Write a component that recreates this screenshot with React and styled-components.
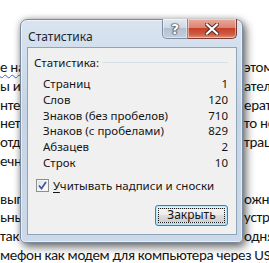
import React from "react";
import styled, { createGlobalStyle } from "styled-components";

const GlobalStyle = createGlobalStyle`
  html, body { margin: 0; padding: 0; background: #ffffff; }
  body { overflow: hidden; }
`;

const Page = styled.div`
  position: relative;
  width: 269px;
  height: 263px;
  overflow: hidden;
  background: #ffffff;
`;

const Document = styled.div`
  padding-top: 58px;
  font-family: Carlito, Lato, "Liberation Sans", sans-serif;
  font-size: 15px;
  letter-spacing: -0.3px;
  line-height: 18.8px;
  color: #161616;
`;

const Line = styled.div`
  display: grid;
  grid-template-columns: 244px 1fr;
  height: 18.8px;
  white-space: nowrap;
`;

const Fragment = styled.span`
  text-decoration: ${(p) => (p.$wavy ? `underline wavy ${p.$wavy}` : "none")};
  text-decoration-thickness: 1px;
  text-underline-offset: 2px;
`;

const FullLine = styled.div`
  height: 18.8px;
  white-space: nowrap;
`;

const Dialog = styled.div`
  position: absolute;
  left: 20px;
  top: 19px;
  width: 223px;
  height: 224px;
  box-sizing: border-box;
  border: 1px solid #7a8ba0;
  border-radius: 7px 7px 5px 5px;
  background: linear-gradient(180deg, #d9e4f0 0%, #c6d5e6 40%, #ccd9e8 100%);
  box-shadow: 0 0 0 1px rgba(255,255,255,0.55) inset, 3px 4px 10px rgba(0,0,0,0.55), 0 0 6px rgba(0,0,0,0.25);
  display: flex;
  flex-direction: column;
  font-family: "Noto Sans", "Open Sans", sans-serif;
  font-size: 11.5px;
  color: #151515;
`;

const TitleBar = styled.div`
  height: 27px;
  display: flex;
  align-items: flex-start;
  padding: 0 5px 0 7px;
`;

const Title = styled.span`
  margin-top: 8px;
  font-size: 12px;
  color: #1e2630;
`;

const CaptionButtons = styled.div`
  margin-left: auto;
  display: flex;
  height: 20px;
  margin-top: -1px;
`;

const CaptionButton = styled.div`
  width: ${(p) => (p.$close ? "49px" : "26px")};
  height: 20px;
  box-sizing: border-box;
  display: flex;
  align-items: center;
  justify-content: center;
  border: 1px solid ${(p) => (p.$close ? "#7a3a31" : "#7d8ea3")};
  border-top: none;
  border-left: ${(p) => (p.$close ? "none" : "1px solid #7d8ea3")};
  border-radius: ${(p) => (p.$close ? "0 0 5px 0" : "0 0 0 5px")};
  background: ${(p) =>
    p.$close
      ? "linear-gradient(180deg, #e9a99b 0%, #dd8472 45%, #c6412a 50%, #cf5a40 80%, #e0927a 100%)"
      : "linear-gradient(180deg, #e3e9f0 0%, #cfd8e3 45%, #b3c0d0 50%, #c3cfdd 100%)"};
  box-shadow: inset 0 0 0 1px rgba(255,255,255,0.45);
  color: #fff;
  font-family: "DejaVu Sans", sans-serif;
  font-weight: bold;
  font-size: 14px;
  text-shadow: 0 0 1px #2f3946, 0 0 1px #2f3946, 0 0 1px #2f3946, 0 0 2px #2f3946;
`;

const Client = styled.div`
  margin: 0 5px 0 6px;
  height: 188px;
  box-sizing: border-box;
  border: 1px solid #8fa3b9;
  background: #f0f0f0;
  padding: 6px 8px 0 6px;
  display: flex;
  flex-direction: column;
`;

const GroupHeader = styled.div`
  display: flex;
  align-items: center;
  gap: 4px;
  height: 16px;
  &::after {
    content: "";
    flex: 1;
    height: 1px;
    background: #d5dfe5;
    margin-top: 1px;
  }
`;

const Rows = styled.div`
  margin-top: 6px;
  padding-left: 9px;
  display: flex;
  flex-direction: column;
`;

const Row = styled.div`
  display: flex;
  justify-content: space-between;
  height: 15.8px;
  line-height: 15.8px;
`;

const CheckRow = styled.label`
  display: flex;
  align-items: center;
  gap: 4px;
  margin-top: 8px;
  padding-left: 2px;
  height: 14px;
`;

const CheckBox = styled.span`
  width: 11px;
  height: 11px;
  border: 1px solid #8e8f8f;
  background: linear-gradient(135deg, #dcdcdc 0%, #f5f5f5 60%, #ffffff 100%);
  box-shadow: inset 0 0 0 1px #f4f4f4;
  display: flex;
  align-items: center;
  justify-content: center;
`;

const Underline = styled.span`
  text-decoration: underline;
  text-underline-offset: 2px;
`;

const Footer = styled.div`
  display: flex;
  justify-content: flex-end;
  margin-top: 12px;
`;

const Button = styled.button`
  width: 73px;
  height: 21px;
  box-sizing: border-box;
  border: 1px solid #3c7fb1;
  border-radius: 3px;
  padding: 2px;
  background: linear-gradient(180deg, #eaf6fd 0%, #d9f0fc 50%, #bee6fd 50%, #a7d9f5 100%);
  box-shadow: inset 0 0 0 1px #bfe7fb;
  font-family: "Noto Sans", "Open Sans", sans-serif;
  font-size: 12px;
  color: #151515;
  display: flex;
`;

const FocusRect = styled.span`
  flex: 1;
  border: 1px dotted #1a1a1a;
  display: flex;
  align-items: center;
  justify-content: center;
  line-height: 1;
  background: linear-gradient(180deg, #f2f2f2 0%, #ebebeb 50%, #dddddd 50%, #cfcfcf 100%);
`;

const lines = [
  ["е на", "этом", "#3d62d6"],
  ["ы ил", "ател"],
  ["нтер", "ерат"],
  ["нет", "то не"],
  ["отд", "трац"],
  ["ечн", ""],
  ["", ""],
  ["выг", "ожн"],
  ["ьны", "устр"],
  ["так", "одня"],
];

const stats = [
  ["Страниц", "1"],
  ["Слов", "120"],
  ["Знаков (без пробелов)", "710"],
  ["Знаков (с пробелами)", "829"],
  ["Абзацев", "2"],
  ["Строк", "10"],
];

export default function App() {
  return (
    <Page>
      <GlobalStyle />
      <Document>
        {lines.map(([l, r, wavy], i) => (
          <Line key={i}>
            <span>
              <Fragment $wavy={wavy}>{l}</Fragment>
            </span>
            <Fragment>{r}</Fragment>
          </Line>
        ))}
        <FullLine>
          мефон как модем для компьютера через <Fragment $wavy="#e02020">USB</Fragment>
        </FullLine>
      </Document>
      <Dialog>
        <TitleBar>
          <Title>Статистика</Title>
          <CaptionButtons>
            <CaptionButton>?</CaptionButton>
            <CaptionButton $close>
              <svg width="14" height="12" viewBox="0 0 14 12">
                <path d="M2 1.5 L12 10.5 M12 1.5 L2 10.5" stroke="#4a2a25" strokeWidth="4" strokeLinecap="square" />
                <path d="M2 1.5 L12 10.5 M12 1.5 L2 10.5" stroke="#ffffff" strokeWidth="2.2" strokeLinecap="square" />
              </svg>
            </CaptionButton>
          </CaptionButtons>
        </TitleBar>
        <Client>
          <GroupHeader>Статистика:</GroupHeader>
          <Rows>
            {stats.map(([k, v]) => (
              <Row key={k}>
                <span>{k}</span>
                <span>{v}</span>
              </Row>
            ))}
          </Rows>
          <CheckRow>
            <CheckBox>
              <svg width="9" height="9" viewBox="0 0 9 9">
                <path d="M1 4.5 L3.5 7.5 L8 1" fill="none" stroke="#3a55a8" strokeWidth="1.7" />
              </svg>
            </CheckBox>
            <span>
              <Underline>У</Underline>читывать надписи и сноски
            </span>
          </CheckRow>
          <Footer>
            <Button>
              <FocusRect>Закрыть</FocusRect>
            </Button>
          </Footer>
        </Client>
      </Dialog>
    </Page>
  );
}
